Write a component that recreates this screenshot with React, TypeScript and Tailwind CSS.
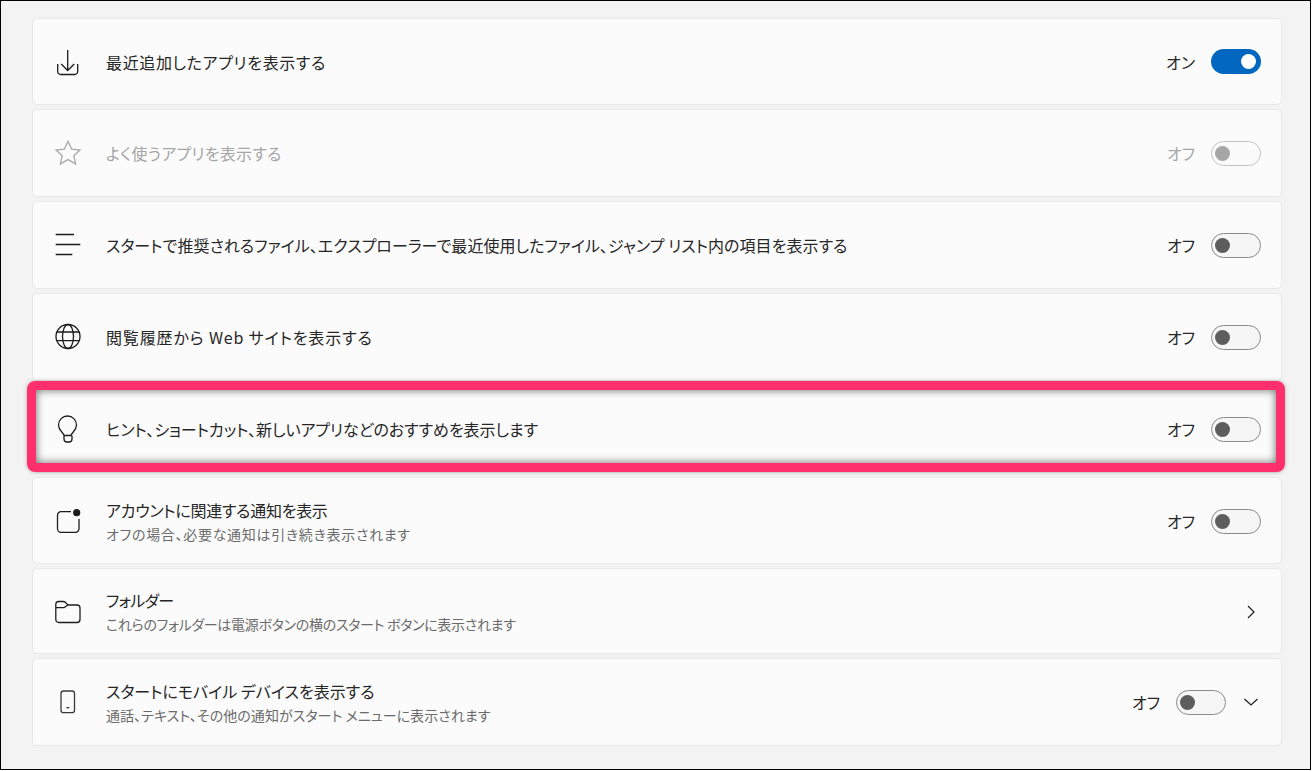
import { ReactNode } from "react";

const Toggle = ({ on, disabled }: { on?: boolean; disabled?: boolean }) => {
  if (on) {
    return (
      <div className="flex h-[25px] w-[50px] items-center justify-end rounded-full bg-[#0067c0] pr-[5px]">
        <div className="size-[15px] rounded-full bg-white" />
      </div>
    );
  }
  return (
    <div
      className={
        disabled
          ? "flex h-[25px] w-[50px] items-center rounded-full border border-[#c5c5c5] bg-[#fbfbfb] pl-[3px]"
          : "flex h-[25px] w-[50px] items-center rounded-full border border-[#8a8a8a] bg-[#f6f6f6] pl-[3px]"
      }
    >
      <div className={disabled ? "size-[15px] rounded-full bg-[#a6a6a6]" : "size-[15px] rounded-full bg-[#5d5d5d]"} />
    </div>
  );
};

const Icon = ({ children, color = "#1c1c1c" }: { children: ReactNode; color?: string }) => (
  <svg width="28" height="28" viewBox="0 0 28 28" fill="none" stroke={color} strokeWidth="1.3" className="shrink-0">
    {children}
  </svg>
);

const rows = [
  {
    h: "h-[87px]",
    title: "最近追加したアプリを表示する",
    titleTrack: "tracking-[0.64px]",
    icon: (
      <Icon>
        <path d="M13.7 2V22.5M7.2 16l6.5 6.5 6.5-6.5M3.7 16v7.5a3 3 0 0 0 3 3h14a3 3 0 0 0 3-3V16" />
      </Icon>
    ),
    state: "オン",
    on: true,
  },
  {
    h: "h-[88px]",
    title: "よく使うアプリを表示する",
    titleTrack: "tracking-[0.25px]",
    disabled: true,
    icon: (
      <Icon color="#a9a9a9">
        <path d="M14 2.2l3.6 7.9 8.4.9-6.2 5.7 1.8 8.2-7.6-4.3-7.6 4.3 1.8-8.2L2 11l8.4-.9z" />
      </Icon>
    ),
    state: "オフ",
  },
  {
    h: "h-[88px]",
    title: "スタートで推奨されるファイル、エクスプローラーで最近使用したファイル、ジャンプ リスト内の項目を表示する",
    titleTrack: "tracking-[0.04px]",
    icon: (
      <Icon>
        <path d="M1.7 3.5H20M1.7 13.5H26.3M1.7 23.5H18.3" />
      </Icon>
    ),
    state: "オフ",
  },
  {
    h: "h-[88px]",
    title: "閲覧履歴から Web サイトを表示する",
    titleTrack: "tracking-[0.85px]",
    icon: (
      <Icon>
        <circle cx="14" cy="13.5" r="12" />
        <ellipse cx="14" cy="13.5" rx="5.5" ry="12" />
        <path d="M3 9h22M3 17.7h22" />
      </Icon>
    ),
    state: "オフ",
  },
  {
    h: "h-[88px]",
    title: "ヒント、ショートカット、新しいアプリなどのおすすめを表示します",
    titleTrack: "tracking-[-0.06px]",
    highlight: true,
    icon: (
      <Icon>
        <path d="M10 20.5c-.3-3-5.5-4.5-5.5-10.5a9 9 0 0 1 18 0c0 6-5.2 7.5-5.5 10.5zM10 20.5v3.5a3 3 0 0 0 3 3h2a3 3 0 0 0 3-3v-3.5" />
      </Icon>
    ),
    state: "オフ",
  },
  {
    h: "h-[87px] pt-[1px]",
    title: "アカウントに関連する通知を表示",
    titleTrack: "tracking-[-0.27px]",
    sub: "オフの場合、必要な通知は引き続き表示されます",
    subTrack: "tracking-[0.7px]",
    icon: (
      <Icon>
        <path d="M17 4.7H7a3.5 3.5 0 0 0-3.5 3.5v13.6A3.5 3.5 0 0 0 7 25.3h14.5a3.5 3.5 0 0 0 3.5-3.5V12" />
        <circle cx="22.7" cy="5.7" r="3.6" fill="#1c1c1c" stroke="none" />
      </Icon>
    ),
    state: "オフ",
  },
  {
    h: "h-[86px]",
    title: "フォルダー",
    titleTrack: "tracking-[-0.8px]",
    sub: "これらのフォルダーは電源ボタンの横のスタート ボタンに表示されます",
    subTrack: "tracking-[-0.3px]",
    icon: (
      <Icon>
        <path d="M1.8 7.5a3 3 0 0 1 3-3h4.4a3 3 0 0 1 2 .8L14 8h9a3 3 0 0 1 3 3v11.5a3 3 0 0 1-3 3H4.8a3 3 0 0 1-3-3zM1.8 10.7h7.5a2 2 0 0 0 1.3-.5L14 8" />
      </Icon>
    ),
    chevron: true,
  },
  {
    h: "h-[88px]",
    title: "スタートにモバイル デバイスを表示する",
    sub: "通話、テキスト、その他の通知がスタート メニューに表示されます",
    subTrack: "tracking-[0.06px]",
    icon: (
      <Icon color="#3a3a3a">
        <rect x="7" y="3" width="13.5" height="21.7" rx="2.5" />
        <path d="M12.3 19.7h3" />
      </Icon>
    ),
    state: "オフ",
    expand: true,
  },
];

export default function App() {
  return (
    <div
      className="flex h-[770px] w-[1311px] flex-col gap-[4px] overflow-hidden border border-black bg-[#f3f3f3] pt-[17px] pl-[31px] text-[#262626] [font-feature-settings:'palt']"
      style={{ fontFamily: '"Noto Sans CJK JP", "Noto Sans", sans-serif' }}
    >
      {rows.map((row) => (
        <div
          key={row.title}
          className={`relative flex w-[1250px] shrink-0 items-center rounded-[5px] border border-[#e8e8e8] bg-[#fbfbfb] pl-[21px] ${row.h}`}
        >
          {row.icon}
          <div className="ml-[24px] flex min-w-0 flex-1 flex-col">
            <div className={`text-[16px] leading-[24px] ${row.titleTrack ?? ""} ${row.disabled ? "text-[#a6a6a6]" : ""}`}>
              {row.title}
            </div>
            {row.sub && (
              <div className={`mt-[2px] text-[14px] leading-[20px] text-[#6b6b6b] ${row.subTrack ?? ""}`}>{row.sub}</div>
            )}
          </div>
          {row.state && (
            <span className={row.disabled ? "mr-[16px] text-[16px] text-[#a6a6a6]" : "mr-[16px] text-[16px]"}>
              {row.state}
            </span>
          )}
          {row.state && <Toggle on={row.on} disabled={row.disabled} />}
          {row.expand ? (
            <svg width="16" height="16" viewBox="0 0 16 16" fill="none" stroke="#1c1c1c" strokeWidth="1.2" className="ml-[17px] mr-[22px]">
              <path d="M1.5 5l6.5 6 6.5-6" />
            </svg>
          ) : row.chevron ? (
            <svg width="16" height="16" viewBox="0 0 16 16" fill="none" stroke="#1c1c1c" strokeWidth="1.2" className="mt-[2px] mr-[22px]">
              <path d="M5 2l6 6-6 6" />
            </svg>
          ) : (
            <div className="w-[20px]" />
          )}
          {row.highlight && (
            <div className="pointer-events-none absolute -top-[5px] -right-[4px] bottom-0 -left-[6px] rounded-[8px] border-[9px] border-[#ff2e6c] shadow-[inset_0_0_8px_rgba(0,0,0,0.6),0_0_4px_rgba(0,0,0,0.25)]" />
          )}
        </div>
      ))}
    </div>
  );
}
